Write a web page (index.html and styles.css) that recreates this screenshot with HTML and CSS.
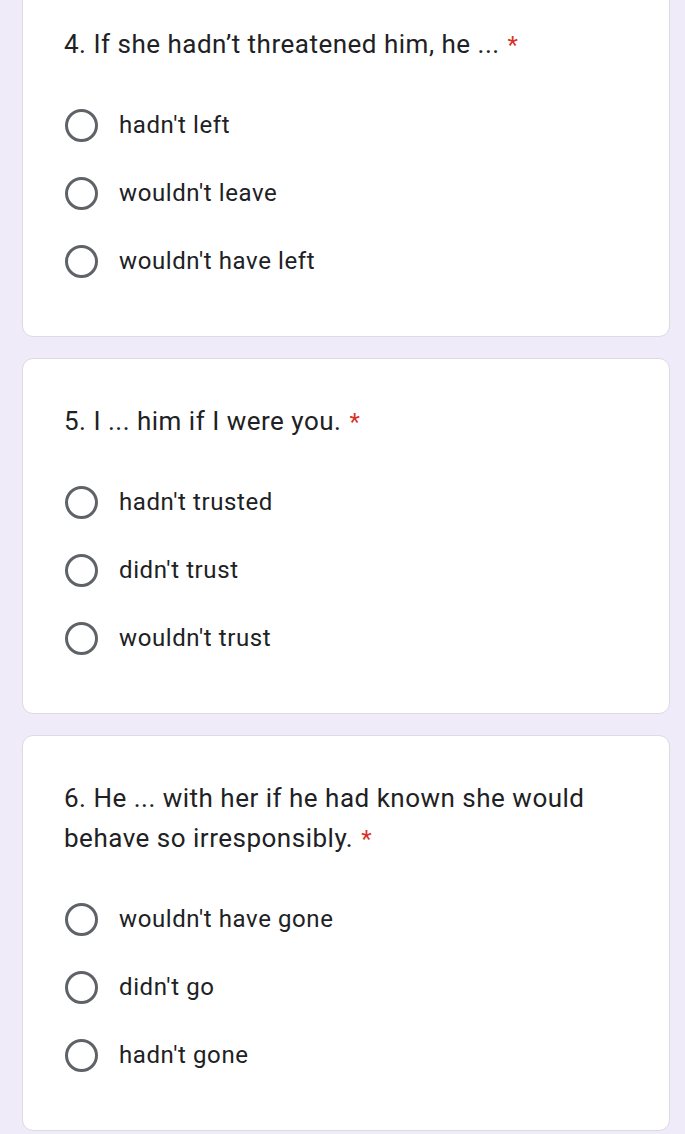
FILE: index.html
```html
<!DOCTYPE html>
<html>
<head>
<meta charset="utf-8">
<link rel="stylesheet" href="styles.css">
</head>
<body>
<div class="list">
  <div class="card">
    <div class="question">4. If she hadn’t threatened him, he ... <span class="req">*</span></div>
    <div class="options">
      <div class="option"><span class="radio"></span><span class="label">hadn't left</span></div>
      <div class="option"><span class="radio"></span><span class="label">wouldn't leave</span></div>
      <div class="option"><span class="radio"></span><span class="label">wouldn't have left</span></div>
    </div>
  </div>
  <div class="card">
    <div class="question">5. I ... him if I were you. <span class="req">*</span></div>
    <div class="options">
      <div class="option"><span class="radio"></span><span class="label">hadn't trusted</span></div>
      <div class="option"><span class="radio"></span><span class="label">didn't trust</span></div>
      <div class="option"><span class="radio"></span><span class="label">wouldn't trust</span></div>
    </div>
  </div>
  <div class="card">
    <div class="question">6. He ... with her if he had known she would behave so irresponsibly. <span class="req">*</span></div>
    <div class="options">
      <div class="option"><span class="radio"></span><span class="label">wouldn't have gone</span></div>
      <div class="option"><span class="radio"></span><span class="label">didn't go</span></div>
      <div class="option"><span class="radio"></span><span class="label">hadn't gone</span></div>
    </div>
  </div>
</div>
</body>
</html>
```
FILE: styles.css
```css
html, body {
  margin: 0;
  padding: 0;
}
body {
  background: #f0ebf8;
  font-family: Roboto, "Liberation Sans", sans-serif;
  color: #202124;
  overflow: hidden;
}
.list {
  margin-top: -19px;
  padding: 0 15px 0 22px;
  display: flex;
  flex-direction: column;
  gap: 21px;
}
.card {
  background: #fff;
  border: 1px solid #dadce0;
  border-radius: 11px;
  padding: 42px 42px 41px 41px;
}
.question {
  font-size: 26px;
  line-height: 40px;
  letter-spacing: 0.5px;
}
.req {
  color: #d93025;
  font-size: 24px;
  line-height: 0;
  margin-left: 1px;
}
.options {
  margin-top: 27px;
  display: flex;
  flex-direction: column;
}
.option {
  height: 68px;
  display: flex;
  align-items: center;
}
.radio {
  width: 27px;
  height: 27px;
  border: 3px solid #5f6368;
  border-radius: 50%;
  margin-left: 1px;
  flex: none;
}
.label {
  margin-left: 21px;
  font-size: 24px;
  letter-spacing: 0.6px;
}
```
